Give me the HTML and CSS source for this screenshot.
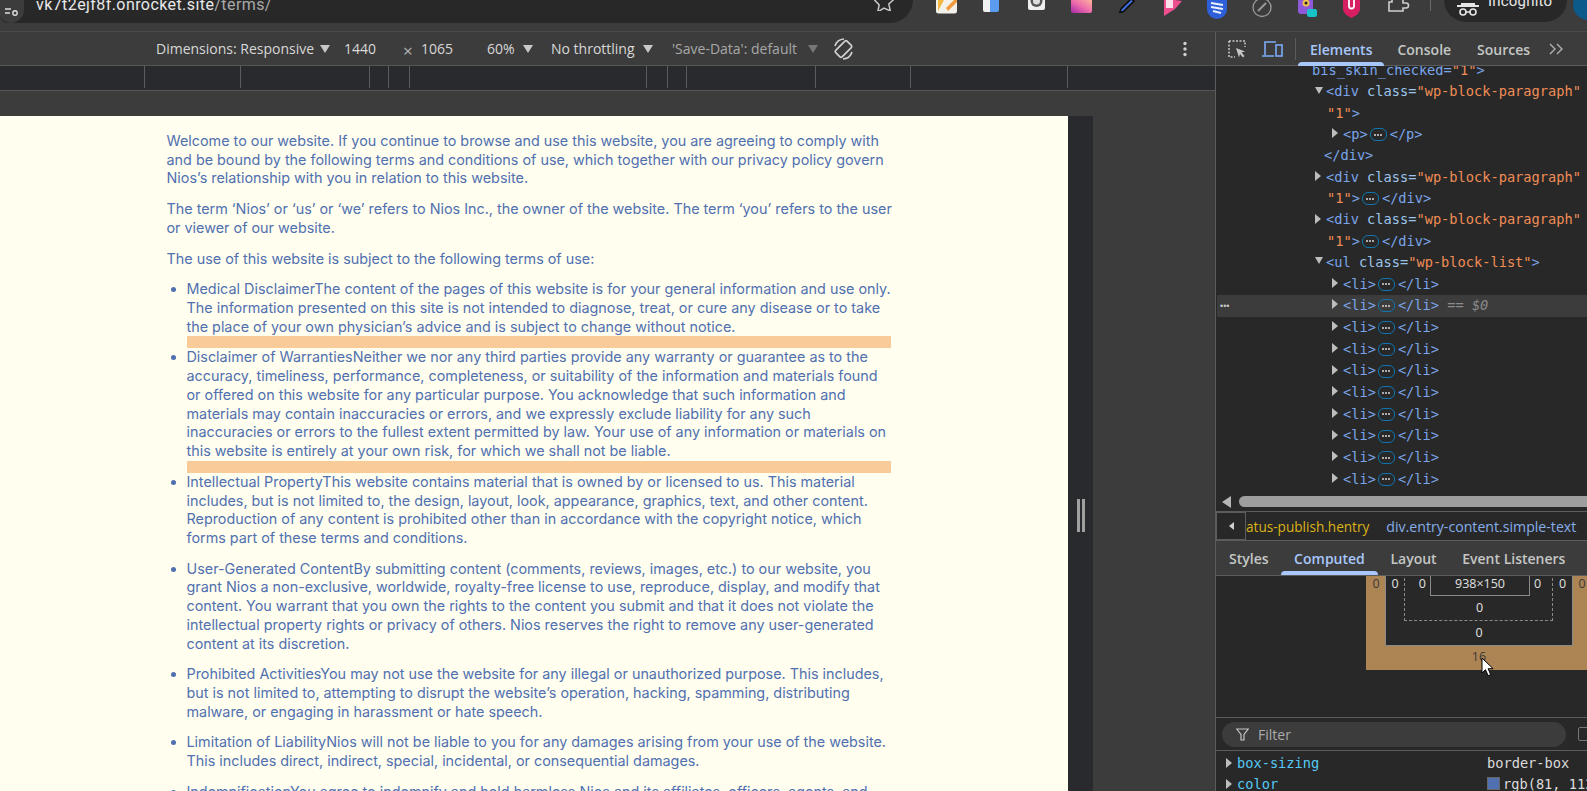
FILE: index.html
```html
<!DOCTYPE html>
<html lang="en">
<head>
<meta charset="utf-8">
<title>Terms</title>
<link rel="stylesheet" href="styles.css">
</head>
<body>
<div class="app">
  <header class="chrome">
    <div class="omnibox">
      <span class="tune"><svg width="16" height="10" viewBox="0 0 16 10"><path d="M1 2h6M1 6h5" stroke="#ddd" stroke-width="1.4" fill="none"/><circle cx="11" cy="6" r="2.2" stroke="#ddd" stroke-width="1.4" fill="none"/></svg></span>
      <span class="url">vk7t2ejf8f.onrocket.site<span class="url-path">/terms/</span></span>
      <svg class="star" width="20" height="12" viewBox="0 0 20 12"><path d="M10 -7l3 6.5 7 .8-5.200 4.700 1.500 6.900L10 9l-6.300 3.900 1.500-6.900L0 .3l7-.8z" fill="none" stroke="#c8c8c8" stroke-width="1.500"/></svg>
    </div>
    <div class="exts">
      <svg class="ext e1" viewBox="0 0 21 14"><path d="M0 0h21v11a2.500 2.500 0 0 1-2.500 2.500h-16A2.500 2.500 0 0 1 0 11z" fill="#f3f1ea"/><path d="M2 0h6L2 11z" fill="#f5b942"/><path d="M10 8l8-8h3v2l-9 9z" fill="#f39a3c"/></svg>
      <svg class="ext e2" viewBox="0 0 16 12"><path d="M0 0h7v12H2a2 2 0 0 1-2-2z" fill="#f1f1f1"/><path d="M7 0h9v10a2 2 0 0 1-2 2H7z" fill="#5b9bf0"/></svg>
      <svg class="ext e3" viewBox="0 0 17 10"><path d="M0 0h17v8a2 2 0 0 1-2 2H2a2 2 0 0 1-2-2z" fill="#efefef"/><circle cx="8.500" cy="1" r="6" fill="#555"/><circle cx="8.500" cy="1" r="3.500" fill="#ddd"/></svg>
      <svg class="ext e4" viewBox="0 0 21 13"><defs><linearGradient id="g4" x1="0" y1="1" x2="1" y2="0"><stop offset="0" stop-color="#a52aa8"/><stop offset=".5" stop-color="#ee6bab"/><stop offset="1" stop-color="#fcb39c"/></linearGradient></defs><path d="M0 0h21v11a2 2 0 0 1-2 2H2a2 2 0 0 1-2-2z" fill="url(#g4)"/></svg>
      <svg class="ext e5" viewBox="0 0 17 13"><path d="M12 -1L2 9 .8 12.500 4.500 11.500 15 1z" fill="#3f6fe0" stroke="#0c0c0c" stroke-width="1.500"/></svg>
      <svg class="ext e6" viewBox="0 0 21 16"><path d="M3 0h11l7 1-7 8-11 7z" fill="#ed4f8f"/><rect x="5" y="0" width="7" height="8" fill="#fbe1ec"/></svg>
      <svg class="ext e7" viewBox="0 0 20 19"><path d="M0 0h20v9a10 10 0 0 1-20 0z" fill="#2f5fd8"/><path d="M4 3l12 2M4 7l12 2M6 11l8 2" stroke="#e9f0ff" stroke-width="2"/></svg>
      <svg class="ext e8" viewBox="0 0 20 18"><circle cx="10" cy="7.500" r="9" fill="none" stroke="#9a9a9a" stroke-width="1.300"/><path d="M6 11l8-8" stroke="#9a9a9a" stroke-width="2"/></svg>
      <svg class="ext e9" viewBox="0 0 19 18"><rect width="15" height="16" y="-2" rx="3" fill="#8e59d8"/><circle cx="8" cy="3" r="3.500" fill="#f2c14e"/><circle cx="8" cy="3" r="1.500" fill="#222"/><rect x="9" y="9" width="10" height="8" rx="2" fill="#19c2c9"/></svg>
      <svg class="ext e10" viewBox="0 0 17 18"><path d="M0 0h17v9q0 5-8.500 9Q0 14 0 9z" fill="#d81e63"/><path d="M6 0v6a2.500 2.500 0 0 0 5 0V0" fill="none" stroke="#fff" stroke-width="1.800"/></svg>
      <svg class="ext e11" viewBox="0 0 23 12"><path d="M5 0v2H2v9h14V8h3a2.500 2.500 0 0 0 0-5h-3V0" fill="none" stroke="#cfcfcf" stroke-width="1.600"/></svg>
      <span class="ext-sep"></span>
      <div class="incog">
        <svg width="24" height="13" viewBox="0 0 24 13"><path d="M1 3h22" stroke="#e6e6e6" stroke-width="2"/><path d="M5 0h14v2H5z" fill="#e6e6e6"/><circle cx="7" cy="9" r="3" fill="none" stroke="#e6e6e6" stroke-width="1.600"/><circle cx="17" cy="9" r="3" fill="none" stroke="#e6e6e6" stroke-width="1.600"/><path d="M10 9h4" stroke="#e6e6e6" stroke-width="1.400"/></svg>
        <span class="incog-label">Incognito</span>
      </div>
      <span class="avatar"></span>
    </div>
  </header>

  <div class="workspace">
    <section class="viewport">
      <div class="dev-toolbar">
        <span>Dimensions: Responsive</span><i class="caret"></i>
        <span>1440</span>
        <span class="times">×</span>
        <span>1065</span>
        <span>60%</span><i class="caret"></i>
        <span>No throttling</span><i class="caret"></i>
        <span class="dim">'Save-Data': default</span><i class="caret caret-dim"></i>
        <svg class="rotate" width="25" height="24" viewBox="0 0 25 24"><g fill="none" stroke="#d0d0d0" stroke-width="1.700"><rect x="8" y="4" width="9" height="16" rx="1.500" transform="rotate(45 12.500 12)"/><path d="M4 9a10 10 0 0 1 9-7M21 15a10 10 0 0 1-9 7"/></g></svg>
        <svg class="kebab" width="4" height="16" viewBox="0 0 4 16"><circle cx="2" cy="2.500" r="1.700" fill="#d0d0d0"/><circle cx="2" cy="8" r="1.700" fill="#d0d0d0"/><circle cx="2" cy="13.500" r="1.700" fill="#d0d0d0"/></svg>
      </div>
      <div class="ruler">
        <i></i><i></i><i></i><i></i><i></i><i></i><i></i><i></i><i></i><i></i><i></i>
      </div>
      <div class="stage-gap"></div>
      <div class="stage">
        <article class="page">
          <p>Welcome to our website. If you continue to browse and use this website, you are agreeing to comply with and be bound by the following terms and conditions of use, which together with our privacy policy govern Nios’s relationship with you in relation to this website.</p>
          <p>The term ‘Nios’ or ‘us’ or ‘we’ refers to Nios Inc., the owner of the website. The term ‘you’ refers to the user or viewer of our website.</p>
          <p>The use of this website is subject to the following terms of use:</p>
          <ul>
            <li class="hl">Medical DisclaimerThe content of the pages of this website is for your general information and use only. The information presented on this site is not intended to diagnose, treat, or cure any disease or to take the place of your own physician’s advice and is subject to change without notice.</li>
            <li class="hl">Disclaimer of WarrantiesNeither we nor any third parties provide any warranty or guarantee as to the accuracy, timeliness, performance, completeness, or suitability of the information and materials found or offered on this website for any particular purpose. You acknowledge that such information and materials may contain inaccuracies or errors, and we expressly exclude liability for any such inaccuracies or errors to the fullest extent permitted by law. Your use of any information or materials on this website is entirely at your own risk, for which we shall not be liable.</li>
            <li>Intellectual PropertyThis website contains material that is owned by or licensed to us. This material includes, but is not limited to, the design, layout, look, appearance, graphics, text, and other content. Reproduction of any content is prohibited other than in accordance with the copyright notice, which forms part of these terms and conditions.</li>
            <li>User-Generated ContentBy submitting content (comments, reviews, images, etc.) to our website, you grant Nios a non-exclusive, worldwide, royalty-free license to use, reproduce, display, and modify that content. You warrant that you own the rights to the content you submit and that it does not violate the intellectual property rights or privacy of others. Nios reserves the right to remove any user-generated content at its discretion.</li>
            <li>Prohibited ActivitiesYou may not use the website for any illegal or unauthorized purpose. This includes, but is not limited to, attempting to disrupt the website’s operation, hacking, spamming, distributing malware, or engaging in harassment or hate speech.</li>
            <li>Limitation of LiabilityNios will not be liable to you for any damages arising from your use of the website. This includes direct, indirect, special, incidental, or consequential damages.</li>
            <li>IndemnificationYou agree to indemnify and hold harmless Nios and its affiliates, officers, agents, and employees from any claims arising from your use of the website.</li>
          </ul>
        </article>
        <div class="page-side"><span class="handle"></span></div>
      </div>
    </section>

    <aside class="devtools">
      <div class="dt-tabs">
        <svg class="dt-inspect" width="18" height="18" viewBox="0 0 18 18"><path d="M1 1h16v6M1 1v16h6" fill="none" stroke="#c4c7c5" stroke-width="1.500" stroke-dasharray="2 1.500"/><path d="M8 8l9 3.500-3.500 1 3 3.500-1.500 1.500-3-3.500-1 3.500z" fill="#c4c7c5"/></svg>
        <svg class="dt-device" width="21" height="18" viewBox="0 0 21 18"><path d="M3 15V2h11M0 16h12" fill="none" stroke="#7cacf8" stroke-width="1.600"/><rect x="14" y="5" width="6" height="11" fill="none" stroke="#7cacf8" stroke-width="1.600"/></svg>
        <span class="dt-sep"></span>
        <span class="tab tab-on">Elements</span>
        <span class="tab">Console</span>
        <span class="tab">Sources</span>
        <svg class="more" width="15" height="12" viewBox="0 0 15 12"><path d="M1 1l5 5-5 5M8 1l5 5-5 5" fill="none" stroke="#b0b0b0" stroke-width="1.400"/></svg>
      </div>

      <div class="elements">
        <div class="tree">
          <div class="row r0"><span class="tag">bis_skin_checked=</span><span class="val">"1"</span><span class="tag">&gt;</span></div>
          <div class="row r1"><i class="tri-d"></i><span class="tag">&lt;div </span><span class="attr">class=</span><span class="val">"wp-block-paragraph"</span></div>
          <div class="row rw"><span class="val">"1"</span><span class="tag">&gt;</span></div>
          <div class="row rp"><i class="tri-r"></i><span class="tag">&lt;p&gt;</span><b class="pill"></b><span class="tag">&lt;/p&gt;</span></div>
          <div class="row rc"><span class="tag">&lt;/div&gt;</span></div>
          <div class="row r1"><i class="tri-r"></i><span class="tag">&lt;div </span><span class="attr">class=</span><span class="val">"wp-block-paragraph"</span></div>
          <div class="row rw"><span class="val">"1"</span><span class="tag">&gt;</span><b class="pill"></b><span class="tag">&lt;/div&gt;</span></div>
          <div class="row r1"><i class="tri-r"></i><span class="tag">&lt;div </span><span class="attr">class=</span><span class="val">"wp-block-paragraph"</span></div>
          <div class="row rw"><span class="val">"1"</span><span class="tag">&gt;</span><b class="pill"></b><span class="tag">&lt;/div&gt;</span></div>
          <div class="row r1"><i class="tri-d"></i><span class="tag">&lt;ul </span><span class="attr">class=</span><span class="val">"wp-block-list"</span><span class="tag">&gt;</span></div>
          <div class="row r2"><i class="tri-r"></i><span class="tag">&lt;li&gt;</span><b class="pill"></b><span class="tag">&lt;/li&gt;</span></div>
          <div class="row r2 sel"><span class="sel-dots">•••</span><i class="tri-r"></i><span class="tag">&lt;li&gt;</span><b class="pill"></b><span class="tag">&lt;/li&gt;</span><em class="eq"> == $0</em></div>
          <div class="row r2"><i class="tri-r"></i><span class="tag">&lt;li&gt;</span><b class="pill"></b><span class="tag">&lt;/li&gt;</span></div>
          <div class="row r2"><i class="tri-r"></i><span class="tag">&lt;li&gt;</span><b class="pill"></b><span class="tag">&lt;/li&gt;</span></div>
          <div class="row r2"><i class="tri-r"></i><span class="tag">&lt;li&gt;</span><b class="pill"></b><span class="tag">&lt;/li&gt;</span></div>
          <div class="row r2"><i class="tri-r"></i><span class="tag">&lt;li&gt;</span><b class="pill"></b><span class="tag">&lt;/li&gt;</span></div>
          <div class="row r2"><i class="tri-r"></i><span class="tag">&lt;li&gt;</span><b class="pill"></b><span class="tag">&lt;/li&gt;</span></div>
          <div class="row r2"><i class="tri-r"></i><span class="tag">&lt;li&gt;</span><b class="pill"></b><span class="tag">&lt;/li&gt;</span></div>
          <div class="row r2"><i class="tri-r"></i><span class="tag">&lt;li&gt;</span><b class="pill"></b><span class="tag">&lt;/li&gt;</span></div>
          <div class="row r2"><i class="tri-r"></i><span class="tag">&lt;li&gt;</span><b class="pill"></b><span class="tag">&lt;/li&gt;</span></div>
        </div>
        <div class="hscroll"><i class="hs-arrow"></i><span class="hs-thumb"></span></div>
      </div>

      <div class="crumbs">
        <span class="crumb-back"><i></i></span>
        <span class="crumb-y">atus-publish.hentry</span>
        <span class="crumb-b">div.entry-content.simple-text</span>
      </div>

      <div class="subtabs">
        <span class="subtab">Styles</span>
        <span class="subtab subtab-on">Computed</span>
        <span class="subtab">Layout</span>
        <span class="subtab">Event Listeners</span>
      </div>

      <div class="boxmodel">
        <div class="bm bm-margin">
          <span class="side">0</span>
          <div class="bm bm-border">
            <span class="side">0</span>
            <div class="bm bm-padding">
              <span class="side side-l">0</span>
              <div class="bm-content">938×150</div>
              <span class="side side-r">0</span>
              <span class="bottom">0</span>
            </div>
            <span class="side">0</span>
            <span class="bottom">0</span>
          </div>
          <span class="side">0</span>
          <span class="bottom bottom-m">16</span>
        </div>
        <svg class="cursor" width="13" height="20" viewBox="0 0 13 20"><path d="M1 1v15l3.500-3.300 2.600 6 2.600-1.100-2.600-5.900h5z" fill="#fff" stroke="#000"/></svg>
      </div>

      <div class="filter">
        <div class="filter-box">
          <svg width="13" height="13" viewBox="0 0 13 13"><path d="M.7 1h11.600L8 6.500V12H5V6.500z" fill="none" stroke="#c4c7c5" stroke-width="1.200"/></svg>
          <span>Filter</span>
        </div>
        <span class="check"></span>
      </div>

      <div class="props">
        <div class="prop"><i class="tri-r"></i><span class="p-name">box-sizing</span><span class="p-val">border-box</span></div>
        <div class="prop"><i class="tri-r"></i><span class="p-name">color</span><span class="p-val"><b class="swatch"></b>rgb(81, 112, 176)</span></div>
      </div>
    </aside>
  </div>
</div>
</body>
</html>
```
FILE: styles.css
```css
* { box-sizing: border-box; }
html, body { margin: 0; height: 100%; overflow: hidden; background: #3c3c3c; }
body { width: 1587px; height: 791px; font-family: "Open Sans", "Liberation Sans", sans-serif; color: #d5d5d5; }
.app { display: grid; grid-template-rows: 32px 1fr; height: 791px; width: 1587px; overflow: hidden; }

/* browser chrome */
.chrome { display: flex; background: #3c3c3c; border-bottom: 1px solid #4a4a4a; height: 32px; overflow: hidden; }
.omnibox { width: 913px; flex: none; height: 23px; background: #282828; border-radius: 0 0 23px 8px; display: flex; align-items: flex-end; overflow: hidden; }
.tune { width: 25px; height: 25px; margin-left: -1px; border-radius: 0 0 14px 12px; background: #3c3c3c; display: flex; align-items: flex-end; justify-content: center; padding-bottom: 6px; flex: none; }
.url { margin-left: 12px; font: 16px/20px Roboto, sans-serif; color: #e8e8e8; margin-bottom: 8px; letter-spacing: .42px; white-space: nowrap; }
.url-path { color: #a8a8a8; }
.star { margin-left: auto; margin-right: 19px; margin-bottom: 12px; }
.exts { display: flex; align-items: flex-start; flex: 1; min-width: 0; }
.ext { display: block; flex: none; }
.e1 { width: 21px; height: 14px; margin-left: 23px; }
.e2 { width: 16px; height: 12px; margin-left: 26px; }
.e3 { width: 17px; height: 10px; margin-left: 29px; }
.e4 { width: 21px; height: 13px; margin-left: 26px; }
.e5 { width: 17px; height: 13px; margin-left: 27px; }
.e6 { width: 21px; height: 16px; margin-left: 25px; }
.e7 { width: 20px; height: 19px; margin-left: 25px; }
.e8 { width: 20px; height: 18px; margin-left: 25px; }
.e9 { width: 19px; height: 18px; margin-left: 26px; }
.e10 { width: 17px; height: 18px; margin-left: 26px; }
.e11 { width: 23px; height: 12px; margin-left: 27px; }
.ext-sep { width: 1px; height: 11px; background: #6a6a6a; margin-left: 20px; flex: none; }
.incog { width: 123px; height: 22px; margin-left: 13px; background: #282828; border-radius: 0 0 22px 22px; display: flex; align-items: flex-end; padding-left: 12px; overflow: hidden; flex: none; }
.incog svg { margin-bottom: 6px; flex: none; }
.incog-label { margin-left: 8px; font: 15px/18px Roboto, sans-serif; color: #e6e6e6; margin-bottom: 12px; letter-spacing: .2px; }
.avatar { width: 30px; height: 30px; margin-top: -10px; margin-left: 6px; background: #0b5a8a; border-radius: 50%; flex: none; }

.workspace { display: grid; grid-template-columns: 1215px 372px; min-height: 0; }

/* left */
.viewport { display: flex; flex-direction: column; min-width: 0; overflow: hidden; }
.dev-toolbar { height: 34px; flex: none; border-bottom: 1px solid #555; display: grid; align-items: center; font-size: 14px; white-space: nowrap; color: #d8d8d8;
  grid-template-columns: 156px 164px 24px 59px 18px 66px 36px 28px 92px 29px 136px 23px 352px 1fr; }
.dev-toolbar > :first-child { grid-column: 2; }
.dim { color: #a8a8a8; }
.times { font-size: 17px; color: #b5b5b5; line-height: 1; padding-top: 4px; }
.caret { display: block; width: 0; height: 0; border: 5px solid transparent; border-top: 8px solid #c8c8c8; border-bottom: 0; }
.caret-dim { border-top-color: #777; }
.rotate { display: block; }
.kebab { display: block; }
.ruler { height: 24.5px; flex: none; background: #292a2d; border-bottom: 1px solid #555; display: grid; align-items: start;
  grid-template-columns: 145px 96px 129px 19px 21px 237px 21px 19px 129px 95px 157px; }
.ruler i { display: block; height: 22px; border-right: 1px solid #5c5c5c; }
.stage-gap { height: 25.500px; flex: none; background: #3c3c3c; }
.stage { flex: 1; display: flex; min-height: 0; overflow: hidden; }
.page { width: 1068px; flex: none; background: #fffeef; padding: 16px 175px 0 166.5px; font: 14.36px/18.72px Inter, "Liberation Sans", sans-serif; color: #5170b0; overflow: hidden; }
.page p { margin: 0 0 12px; }
.page ul { margin: 0 2px 0 0; padding: 0 0 0 20px; }
.page li { margin-bottom: 12px; }
.page li.hl { margin-bottom: 0; border-bottom: 12px solid #f9cb98; }
.page-side { width: 25px; flex: none; background: #292a2d; display: flex; justify-content: center; padding-top: 383px; }
.handle { width: 8px; height: 33px; border-left: 3px solid #a0a0a0; border-right: 3px solid #a0a0a0; }

/* devtools */
.devtools { border-left: 1px solid #5c5c5c; display: flex; flex-direction: column; min-width: 0; overflow: hidden; background: #282828; }
.dt-tabs { height: 34px; flex: none; background: #3c3c3c; border-bottom: 1px solid #5c5c5c; display: flex; align-items: center; font-size: 14px; }
.dt-inspect { margin-left: 12px; flex: none; }
.dt-device { margin-left: 16px; flex: none; }
.dt-sep { width: 1px; height: 22px; background: #5c5c5c; margin-left: 12px; flex: none; }
.tab { padding: 2px 13px 0; color: #c4c7c5; font-weight: 600; line-height: 32px; position: relative; }
.tab-on { color: #a8c7fa; margin-left: 2px; padding: 2px 12px 0 12px; }
.tab-on::after { content: ""; position: absolute; left: 0; right: 0; bottom: 0; height: 4px; background: #a8c7fa; border-radius: 4px 4px 0 0; }
.more { margin-left: 6px; flex: none; }

.elements { height: 446px; flex: none; border-bottom: 1px solid #5c5c5c; display: flex; flex-direction: column; overflow: hidden; }
.tree { flex: 1; min-height: 0; overflow: hidden; font: 13.67px/21.35px "DejaVu Sans Mono", monospace; }
.row { height: 21.35px; white-space: pre; display: flex; align-items: center; }
.row:first-child { margin-top: -6px; }
.r0 { padding-left: 96px; }
.r1 { padding-left: 99px; }
.rw { padding-left: 111px; }
.rc { padding-left: 108px; }
.rp { padding-left: 116px; }
.r2 { padding-left: 116px; height: 21.7px; }
.tag { color: #7aa5e8; }
.attr { color: #9cc3ea; }
.val { color: #f08d56; }
.tri-d, .tri-r { display: block; width: 0; height: 0; border: solid transparent; flex: none; }
.tri-d { border-width: 7px 4.500px 0; border-top-color: #bdbdbd; margin-right: 3px; margin-top: -4px; }
.tri-r { border-width: 5px 0 5px 6px; border-left-color: #bdbdbd; margin-right: 5px; margin-top: -3px; }
.pill { display: flex; align-items: center; justify-content: center; width: 17px; height: 13px; margin: 0 3px 0 2px; border: 1.5px solid #0e75b4; border-radius: 6px; flex: none; }
.pill::before { content: ""; width: 2px; height: 2px; background: #d8d8d8; border-radius: 50%; box-shadow: -3px 0 #d8d8d8, 3px 0 #d8d8d8; }
.sel { background: #3c3c3c; margin-left: 1px; padding-left: 115px; position: relative; }
.sel-dots { position: absolute; left: 3px; font-size: 9px; color: #c8c8c8; line-height: 14px; font-family: "Liberation Sans", sans-serif; }
.eq { color: #8a8a8a; }
.hscroll { height: 21px; flex: none; display: flex; align-items: center; padding: 2px 0 0 6px; }
.hs-arrow { width: 0; height: 0; border: solid transparent; border-width: 6px 9px 6px 0; border-right-color: #b5b5b5; flex: none; }
.hs-thumb { flex: 1; height: 11px; margin-left: 8px; margin-right: -10px; border-radius: 6px; background: #9e9e9e; }

.crumbs { height: 29px; flex: none; border-bottom: 1px solid #5c5c5c; display: flex; align-items: center; font-size: 13.6px; white-space: nowrap; overflow: hidden; }
.crumb-back { width: 30px; height: 28px; border: 1px solid #5c5c5c; display: flex; align-items: center; justify-content: center; flex: none; }
.crumb-back i { width: 0; height: 0; border: solid transparent; border-width: 4px 5px 4px 0; border-right-color: #d0d0d0; }
.crumb-y { color: #dbb316; }
.crumb-b { color: #85ade8; margin-left: 17px; font-size: 14.15px; }

.subtabs { height: 34.500px; flex: none; background: #3c3c3c; border-bottom: 1px solid #5c5c5c; display: flex; font-size: 14px; font-weight: 600; line-height: 36px; color: #c4c7c5; }
.subtab { padding: 0 12.800px; position: relative; }
.subtab:first-child { padding-left: 13px; }
.subtab-on { color: #a8c7fa; }
.subtab-on::after { content: ""; position: absolute; left: 0; right: 0; bottom: 0; height: 4px; background: #a8c7fa; border-radius: 4px 4px 0 0; }

.boxmodel { height: 142.500px; flex: none; padding-left: 150px; position: relative; overflow: hidden; font: 12.500px/22px "Open Sans", sans-serif; color: #e0e0e0; border-bottom: 1px solid #5c5c5c; }
.bm { display: grid; text-align: center; }
.bm-margin { width: 226px; margin-top: -2.500px; grid-template-columns: 20px 186px 20px; background: #ad8453; color: #3a3a3a; }
.bm-border { grid-template-columns: 18px 149px 19px; background: #282828; color: #e0e0e0; outline: 1px solid #8a8a8a; }
.bm-padding { grid-template-columns: 25px 100px 24px; border: 1px dashed #8a8a8a; border-top: 0; }
.bm-content { border: 1px solid #8a8a8a; border-top: 0; height: 23px; }
.side { line-height: 22px; }
.side-l { text-align: right; padding-right: 4px; }
.side-r { text-align: left; padding-left: 4px; }
.bottom { grid-column: 1 / -1; line-height: 24px; height: 24px; }
.bottom-m { color: #3a3a3a; height: 25px; }
.cursor { position: absolute; left: 265px; top: 81px; }

.filter { height: 33px; flex: none; border-bottom: 1px solid #5c5c5c; display: flex; align-items: center; padding-left: 6px; }
.filter-box { width: 344px; height: 25px; border-radius: 13px; background: #3c3c3c; display: flex; align-items: center; padding-left: 14px; gap: 9px; font-size: 14px; color: #aaa; flex: none; }
.filter-box svg { flex: none; }
.check { width: 14px; height: 14px; margin-left: 12px; border: 1px solid #777; border-radius: 2px; flex: none; }
.props { font: 13.67px/20.500px "DejaVu Sans Mono", monospace; padding-top: 2px; overflow: hidden; }
.prop { display: flex; align-items: center; height: 20.500px; white-space: nowrap; padding-left: 10px; }
.prop .tri-r { margin: 0 5px 0 0; }
.p-name { color: #55c8f5; width: 250px; flex: none; }
.p-val { color: #dcdcdc; display: flex; align-items: center; }
.swatch { width: 13px; height: 13px; background: #5170b0; margin-right: 3px; border: 1px solid #666; flex: none; }
```
